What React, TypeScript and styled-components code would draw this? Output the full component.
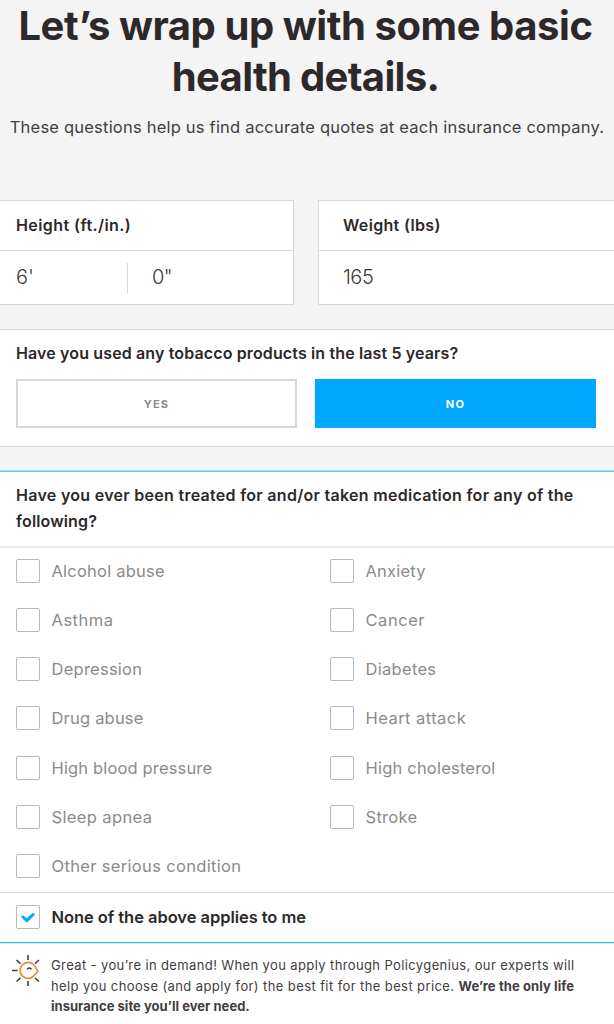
import React, { useState } from "react";
import styled, { createGlobalStyle } from "styled-components";

const GlobalStyle = createGlobalStyle`
  * { box-sizing: border-box; }
  body {
    margin: 0;
    background: #f4f4f4;
    color: #2d2829;
    font-family: Inter, "Liberation Sans", sans-serif;
    overflow: hidden;
  }
`;

const Page = styled.main`
  width: 614px;
  height: 1024px;
  overflow: hidden;
  display: flex;
  flex-direction: column;
`;

const Intro = styled.header`
  height: 200px;
  flex: none;
  text-align: center;
  white-space: nowrap;
`;

const Title = styled.h1`
  margin: 0;
  padding-right: 3px;
  font-size: 40px;
  line-height: 51px;
  font-weight: 700;
`;

const TitleLine = styled.span<{ $spacing: number }>`
  display: block;
  letter-spacing: ${(p) => p.$spacing}px;
`;

const Subtitle = styled.p`
  margin: 12px 0 0;
  font-size: 16.5px;
  line-height: 26px;
  letter-spacing: 0.21px;
  color: #423d3e;
`;

const Fields = styled.section`
  display: flex;
  gap: 24px;
  flex: none;
`;

const Field = styled.div<{ $first?: boolean }>`
  height: 105px;
  flex: ${(p) => (p.$first ? "0 0 294px" : "1")};
  background: #fff;
  border: 1px solid #d7d8d8;
  border-left-width: ${(p) => (p.$first ? 0 : 1)}px;
  border-right-width: ${(p) => (p.$first ? 1 : 0)}px;
`;

const FieldLabel = styled.div<{ $inset: number; $spacing: number }>`
  height: 50px;
  padding-left: ${(p) => p.$inset}px;
  border-bottom: 1px solid #d7d8d8;
  font-size: 16px;
  font-weight: 600;
  line-height: 48px;
  letter-spacing: ${(p) => p.$spacing}px;
`;

const FieldValues = styled.div<{ $inset: number }>`
  display: flex;
  align-items: center;
  height: 53px;
  padding-left: ${(p) => p.$inset}px;
  font-size: 20px;
  line-height: 24px;
  font-weight: 300;
  color: #3d393a;
`;

const Value = styled.span<{ $width?: number; $spacing?: number }>`
  width: ${(p) => (p.$width ? p.$width + "px" : "auto")};
  padding-bottom: 2px;
  letter-spacing: ${(p) => p.$spacing ?? 0}px;
`;

const Divider = styled.span`
  width: 1px;
  height: 30px;
  margin-right: 24px;
  background: #d7d8d8;
`;

const Card = styled.section`
  flex: none;
  height: 118px;
  margin-top: 24px;
  padding: 10px 18px 0 16px;
  background: #fff;
  border: solid #d7d8d8;
  border-width: 1px 0;
`;

const Question = styled.h2<{ $spacing: number }>`
  margin: 0;
  font-size: 16px;
  line-height: 26px;
  font-weight: 600;
  letter-spacing: ${(p) => p.$spacing}px;
  white-space: nowrap;
`;

const QuestionTail = styled.span`
  letter-spacing: 0.15px;
`;

const Choices = styled.div`
  display: flex;
  gap: 18px;
  margin-top: 13px;
`;

const Choice = styled.button<{ $active: boolean }>`
  flex: 1;
  height: 49px;
  padding: 0;
  border: 2px solid ${(p) => (p.$active ? "#00a9ff" : "#d7d8d8")};
  background: ${(p) => (p.$active ? "#00a9ff" : "#fff")};
  color: ${(p) => (p.$active ? "#fff" : "#8b8b8b")};
  font: 700 11px Inter, sans-serif;
  letter-spacing: 1.2px;
`;

const Conditions = styled.section`
  flex: none;
  margin-top: 24px;
  height: 553px;
  background: #fff;
  border-top: 1px solid #5cc4fb;
  box-shadow: 0 -1px #a6dcf8;
`;

const ConditionsHead = styled.div`
  height: 76px;
  padding: 10px 16px 0;
  border-bottom: 2px solid #ebebeb;
`;

const Options = styled.div`
  display: grid;
  grid-template-columns: 314px 1fr;
  grid-auto-rows: 49.25px;
  height: 345px;
  padding-left: 15.5px;
  border-bottom: 1px solid #d7d8d8;
`;

const Option = styled.div<{ $spacing?: number; $strong?: boolean }>`
  display: flex;
  align-items: center;
  gap: 12px;
  padding-bottom: ${(p) => (p.$strong ? 2 : 4)}px;
  font-size: 16.5px;
  font-weight: ${(p) => (p.$strong ? 600 : 400)};
  color: ${(p) => (p.$strong ? "#2d2829" : "#8b8b8b")};
  letter-spacing: ${(p) => p.$spacing ?? 0}px;
  white-space: nowrap;
`;

const Box = styled.span`
  display: grid;
  place-items: center;
  width: 24px;
  height: 24px;
  flex: none;
  border: 1px solid #b9b9b9;
  border-radius: 2px;
  background: #fff;
`;

const NoneRow = styled.div`
  display: flex;
  height: 50px;
  padding-left: 15.5px;
  border-bottom: 1px solid #35b9fc;
  box-shadow: 0 1px #c9edfe;
`;

const Note = styled.footer`
  display: flex;
  padding: 12px 0 0 11px;
  gap: 11px;
`;

const NoteText = styled.p`
  margin: 0;
  font-size: 13px;
  line-height: 20.6px;
  white-space: nowrap;
  color: #423d3e;
`;

const NoteLine = styled.span<{ $spacing: number }>`
  display: block;
  letter-spacing: ${(p) => p.$spacing}px;
`;

const Strong = styled.strong<{ $spacing: number }>`
  font-weight: 700;
  letter-spacing: ${(p) => p.$spacing}px;
`;

const SunIcon = () => (
  <svg width="29" height="33" viewBox="0 0 29 33" fill="none">
    <g stroke="#454041" strokeWidth="1.6">
      <path d="M17 0v5M17 26v5M1 15.5h5.5M5.5 5l4 3.6M28 5l-4 3.6M5.5 26.5l4-3.6M28 26.5l-4-3.6" />
    </g>
    <path
      d="M24.2 11.7A8 8 0 1 0 24 19.5l3-3.3z"
      stroke="#dc9537"
      strokeWidth="1.7"
      strokeLinejoin="round"
    />
    <path d="M16 14.5c1-2 3-2 4.5-.3" stroke="#454041" strokeWidth="1.5" />
  </svg>
);

const Tick = () => (
  <svg width="14" height="12" viewBox="0 0 14 12" fill="none">
    <path d="M2 6l3.7 3.6L12 3.6" stroke="#00a9ff" strokeWidth="3" strokeLinecap="round" />
  </svg>
);

const options: [string, number][] = [
  ["Alcohol abuse", 0.22],
  ["Anxiety", 0.2],
  ["Asthma", 0.5],
  ["Cancer", 0.55],
  ["Depression", 0.25],
  ["Diabetes", 0.3],
  ["Drug abuse", 0.2],
  ["Heart attack", 0.45],
  ["High blood pressure", 0.15],
  ["High cholesterol", 0.2],
  ["Sleep apnea", 0.38],
  ["Stroke", 0.3],
  ["Other serious condition", 0.33],
];

export default function App() {
  const [tobacco, setTobacco] = useState(false);
  return (
    <Page>
      <GlobalStyle />
      <Intro>
        <Title>
          <TitleLine $spacing={-0.43}>Let’s wrap up with some basic</TitleLine>
          <TitleLine $spacing={-0.67}>health details.</TitleLine>
        </Title>
        <Subtitle>These questions help us find accurate quotes at each insurance company.</Subtitle>
      </Intro>
      <Fields>
        <Field $first>
          <FieldLabel $inset={16} $spacing={0.42}>Height (ft./in.)</FieldLabel>
          <FieldValues $inset={16}>
            <Value $width={111}>6'</Value>
            <Divider />
            <Value $spacing={-0.7}>0"</Value>
          </FieldValues>
        </Field>
        <Field>
          <FieldLabel $inset={24} $spacing={0.33}>Weight (lbs)</FieldLabel>
          <FieldValues $inset={24}>
            <Value $spacing={-0.5}>165</Value>
          </FieldValues>
        </Field>
      </Fields>
      <Card>
        <Question $spacing={0.13}>Have you used any tobacco products in the last 5 years?</Question>
        <Choices>
          <Choice $active={tobacco} onClick={() => setTobacco(true)}>YES</Choice>
          <Choice $active={!tobacco} onClick={() => setTobacco(false)}>NO</Choice>
        </Choices>
      </Card>
      <Conditions>
        <ConditionsHead>
          <Question $spacing={0.29}>
            Have you ever been treated for and/or taken medication for any of the
            <br />
            <QuestionTail>following?</QuestionTail>
          </Question>
        </ConditionsHead>
        <Options>
          {options.map(([label, spacing]) => (
            <Option key={label} $spacing={spacing}>
              <Box />
              {label}
            </Option>
          ))}
        </Options>
        <NoneRow>
          <Option $strong $spacing={-0.05}>
            <Box>
              <Tick />
            </Box>
            None of the above applies to me
          </Option>
        </NoneRow>
        <Note>
          <SunIcon />
          <NoteText>
            <NoteLine $spacing={0.38}>
              Great - you’re in demand! When you apply through Policygenius, our experts will
            </NoteLine>
            <NoteLine $spacing={0.4}>
              help you choose (and apply for) the best fit for the best price.{" "}
              <Strong $spacing={0.1}>We’re the only life</Strong>
            </NoteLine>
            <NoteLine $spacing={0}>
              <Strong $spacing={0.03}>insurance site you’ll ever need.</Strong>
            </NoteLine>
          </NoteText>
        </Note>
      </Conditions>
    </Page>
  );
}
